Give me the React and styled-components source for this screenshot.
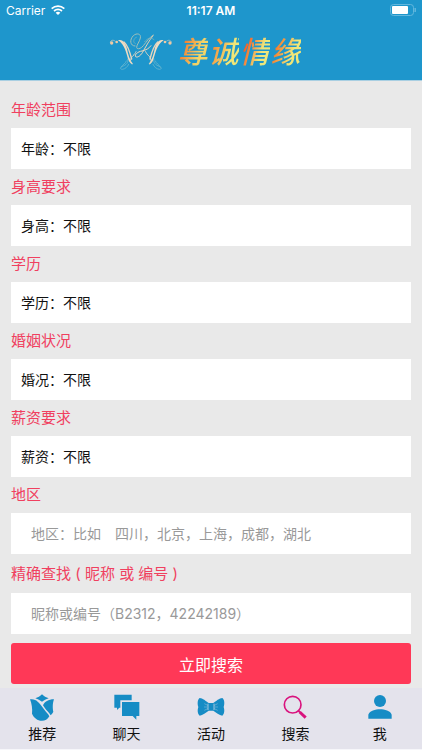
import { useState } from "react";
import styled, { createGlobalStyle } from "styled-components";

const GlobalStyle = createGlobalStyle`
  * {
    box-sizing: border-box;
  }
  body {
    margin: 0;
    background: #e9e9e9;
    font-family: Inter, "Noto Sans CJK SC", sans-serif;
  }
  button, input, select {
    font-family: inherit;
  }
`;

const filters = [
  { id: "age", title: "年龄范围", name: "年龄", options: ["不限", "18-25", "26-35", "36-45"] },
  { id: "height", title: "身高要求", name: "身高", options: ["不限", "150-160", "161-170", "171-180"] },
  { id: "education", title: "学历", name: "学历", options: ["不限", "大专", "本科", "硕士"] },
  { id: "marriage", title: "婚姻状况", name: "婚况", options: ["不限", "未婚", "离异"] },
  { id: "salary", title: "薪资要求", name: "薪资", options: ["不限", "5000以上", "10000以上"] },
];

const RoseIcon = () => (
  <svg width="24" height="27" viewBox="0 0 72 80" fill="currentColor">
    <path d="M36 0C41 6 49 9 56 12C48 15 42 18 36 23C30 18 24 15 16 12C23 9 31 6 36 0Z" />
    <path d="M0 15C8 15 14 16 19 19C29 26 34 36 42 45C47 52 54 58 58 66C53 75 45 80 36 80C22 80 12 72 6 59C8 43 5 28 0 15Z" />
    <path d="M72 15C67 28 68 44 70 53C68 57 65 61 62 63C57 54 50 49 45 42L39 33C44 22 55 15 72 15Z" />
  </svg>
);

const ChatIcon = () => (
  <svg width="26" height="26" viewBox="0 0 78 78" fill="currentColor">
    <path d="M1 2H53V19H19V41H16L9 48V41H1Z" />
    <path d="M24 24H76V66H67V77L56 66H24Z" />
  </svg>
);

const BowIcon = () => (
  <svg width="28" height="20" viewBox="0 0 84 60">
    <path
      fill="currentColor"
      d="M8 3C17 3 27 13 35 18H49C57 13 67 3 76 3C83 8 83 21 80 30C83 39 83 50 76 56C67 55 57 46 49 41H35C27 46 17 55 8 56C1 50 1 39 4 30C1 21 1 8 8 3Z"
    />
    <g fill="none" stroke="#e4e3ec" strokeWidth="2">
      <path d="M33 20V39M51 20V39" />
      <path d="M32 25L22 20M31 30H21M32 35L22 40M52 25L62 20M53 30H63M52 35L62 40" strokeWidth="1" />
    </g>
  </svg>
);

const SearchIcon = () => (
  <svg width="24" height="24" viewBox="0 0 72 72" fill="none" stroke="currentColor">
    <circle cx="29" cy="29" r="25" strokeWidth="5" />
    <path d="M46 47L51 52" strokeWidth="5" />
    <path d="M50 51L68 68" strokeWidth="9" />
  </svg>
);

const PersonIcon = () => (
  <svg width="24" height="24" viewBox="0 0 72 72" fill="currentColor">
    <circle cx="36" cy="18" r="18" />
    <path d="M1 71V59C5 47 22 43 36 43C50 43 67 47 71 59V71Z" />
  </svg>
);

const tabs = [
  { key: "recommend", label: "推荐", icon: RoseIcon },
  { key: "chat", label: "聊天", icon: ChatIcon },
  { key: "events", label: "活动", icon: BowIcon },
  { key: "search", label: "搜索", icon: SearchIcon },
  { key: "me", label: "我", icon: PersonIcon },
];

const Emblem = () => (
  <svg width="66" height="42" viewBox="22 22 198 126" fill="none" strokeLinecap="round">
    <defs>
      <linearGradient id="emblemGold" x1="0" y1="0" x2="0" y2="1">
        <stop offset="0" stopColor="#d8c8b0" />
        <stop offset="1" stopColor="#f3dcc0" />
      </linearGradient>
      <g id="emblemWing">
        <circle cx="33" cy="58" r="5" fill="#efc9a4" />
        <circle cx="48" cy="55" r="4" fill="#efc9a4" />
        <path d="M29 55C30 49 38 48 43 52" stroke="#c9cdbf" strokeWidth="2" />
        <path
          d="M52 50C67 45 75 60 79 76C82 91 87 109 97 121C91 120 86 116 83 108C77 91 73 62 52 50Z"
          fill="#f0dcc2"
        />
        <path d="M70 55C79 63 87 82 93 106" stroke="#e8d5bd" strokeWidth="4" />
        <path d="M94 121C86 120 89 103 97 96C102 92 104 88 106 84" stroke="#e2d6c2" strokeWidth="3" />
        <path
          d="M81 106C84 118 76 124 65 128C58 131 57 137 65 137C74 136 80 130 84 122M77 112C75 120 66 122 62 130"
          stroke="#75bdd0"
          strokeWidth="2"
        />
      </g>
    </defs>
    <use href="#emblemWing" />
    <use href="#emblemWing" transform="translate(241 0) scale(-1 1)" />
    <path
      d="M103 67C88 67 86 48 98 36C108 27 122 30 119 43C117 54 108 63 108 71C109 79 121 75 128 66C138 54 144 43 158 34"
      stroke="#9fc0ba"
      strokeWidth="3"
    />
    <path
      d="M157 36C146 50 137 66 128 82C122 94 112 103 105 99C101 93 111 84 124 82C136 79 145 75 151 66"
      stroke="url(#emblemGold)"
      strokeWidth="3"
    />
    <path d="M104 60C96 57 98 44 107 41M132 54C140 44 150 39 160 48" stroke="#83b7bb" strokeWidth="2" />
  </svg>
);

const App = () => {
  const [activeTab, setActiveTab] = useState("search");
  const [area, setArea] = useState("");
  const [keyword, setKeyword] = useState("");

  return (
    <Page>
      <GlobalStyle />
      <Header>
        <StatusBar>
          <Carrier>
            Carrier
            <svg width="14" height="10" viewBox="0 0 42 30" fill="none" stroke="white" strokeWidth="5">
              <path d="M2 11C13 1 29 1 40 11M9 18C16 12 26 12 33 18" />
              <path d="M14 23C18 19 24 19 28 23L21 30Z" fill="white" stroke="none" />
            </svg>
          </Carrier>
          <Time>11:17 AM</Time>
          <Battery>
            <svg width="26" height="12" viewBox="0 0 26 12">
              <rect x="0.5" y="0.5" width="23" height="11" rx="3" fill="none" stroke="#62b7dd" />
              <rect x="2" y="2" width="16" height="8" rx="1" fill="white" />
              <path d="M25 4C26 5 26 7 25 8Z" fill="#62b7dd" stroke="#62b7dd" />
            </svg>
          </Battery>
        </StatusBar>
        <Brand>
          <Emblem />
          <BrandName>
            <BrandChar $from="#f47a2c" $to="#f2d468">尊</BrandChar>
            <BrandChar $from="#f58a35" $to="#efe678">诚</BrandChar>
            <BrandChar $from="#f8521c" $to="#ece77c">情</BrandChar>
            <BrandChar $from="#f67226" $to="#efe678">缘</BrandChar>
          </BrandName>
        </Brand>
      </Header>

      <Form onSubmit={(ev) => ev.preventDefault()}>
        {filters.map(({ id, title, name, options }) => (
          <Field key={id}>
            <Label htmlFor={id}>{title}</Label>
            <Select id={id}>
              {options.map((option) => (
                <option key={option} value={option}>
                  {name}：{option}
                </option>
              ))}
            </Select>
          </Field>
        ))}
        <Field>
          <Label htmlFor="area">地区</Label>
          <Input
            id="area"
            type="text"
            placeholder="地区：比如　四川，北京，上海，成都，湖北"
            value={area}
            onChange={(ev) => setArea(ev.target.value)}
          />
        </Field>
        <Field>
          <Label htmlFor="keyword" $tall>
            精确查找 ( 昵称 或 编号 )
          </Label>
          <Input
            id="keyword"
            type="text"
            placeholder="昵称或编号（B2312，42242189）"
            value={keyword}
            onChange={(ev) => setKeyword(ev.target.value)}
          />
        </Field>
        <Submit type="submit">立即搜索</Submit>
      </Form>

      <TabBar>
        {tabs.map(({ key, label, icon: Icon }) => (
          <Tab
            key={key}
            href={`#${key}`}
            $active={activeTab === key}
            onClick={() => setActiveTab(key)}
          >
            <IconBox>
              <Icon />
            </IconBox>
            <TabLabel>{label}</TabLabel>
          </Tab>
        ))}
      </TabBar>
    </Page>
  );
};

const Page = styled.div`
  display: flex;
  flex-direction: column;
  min-height: 100vh;
`;

const Header = styled.header`
  background: #1e96cc;
  border-bottom: 1px solid #a9cfe2;
`;

const StatusBar = styled.div`
  display: grid;
  grid-template-columns: 1fr auto 1fr;
  align-items: center;
  height: 20px;
  padding: 0 6px;
  color: white;
  font-size: 12px;
`;

const Carrier = styled.span`
  display: flex;
  align-items: center;
  gap: 6px;
`;

const Time = styled.span`
  font-weight: 600;
`;

const Battery = styled.span`
  display: flex;
  justify-content: flex-end;
`;

const Brand = styled.div`
  display: flex;
  justify-content: center;
  align-items: center;
  gap: 4px;
  height: 60px;
  padding: 4px 14px 0 0;
`;

const BrandName = styled.h1`
  display: flex;
  gap: 1px;
  margin: 0;
  font-size: 30px;
  font-weight: 500;
  font-style: italic;
  line-height: 40px;
`;

const BrandChar = styled.span`
  background: linear-gradient(110deg, ${(props) => props.$from} 20%, ${(props) => props.$to} 65%);
  background-clip: text;
  color: transparent;
`;

const Form = styled.form`
  display: flex;
  flex-direction: column;
  flex: 1;
  padding: 11px 11px 4px;
`;

const Field = styled.div`
  display: flex;
  flex-direction: column;
`;

const Label = styled.label`
  color: #f0405f;
  font-size: 15px;
  line-height: ${(props) => (props.$tall ? "39px" : "36px")};
`;

const Select = styled.select`
  appearance: none;
  width: 100%;
  height: 41px;
  padding: 0 10px;
  border: none;
  border-radius: 0;
  background: white;
  color: #111;
  font-size: 14px;
`;

const Input = styled.input`
  width: 100%;
  height: 41px;
  padding: 0 20px;
  border: none;
  background: white;
  color: #111;
  font-size: 14px;
  &::placeholder {
    color: #999;
  }
`;

const Submit = styled.button`
  height: 41px;
  margin-top: 9px;
  border: none;
  border-radius: 3px;
  background: #ff3857;
  color: white;
  font-size: 16px;
`;

const TabBar = styled.nav`
  display: flex;
  background: #e4e3ec;
  border-bottom: 1px solid #f6f6fa;
`;

const Tab = styled.a`
  display: flex;
  flex: 1;
  flex-direction: column;
  align-items: center;
  gap: 2px;
  padding: 5px 0 4px;
  color: ${(props) => (props.$active ? "#d9137e" : "#168cc5")};
  text-decoration: none;
`;

const IconBox = styled.span`
  display: flex;
  align-items: center;
  height: 28px;
`;

const TabLabel = styled.span`
  color: #111;
  font-size: 14px;
  line-height: 22px;
`;

export default App;
